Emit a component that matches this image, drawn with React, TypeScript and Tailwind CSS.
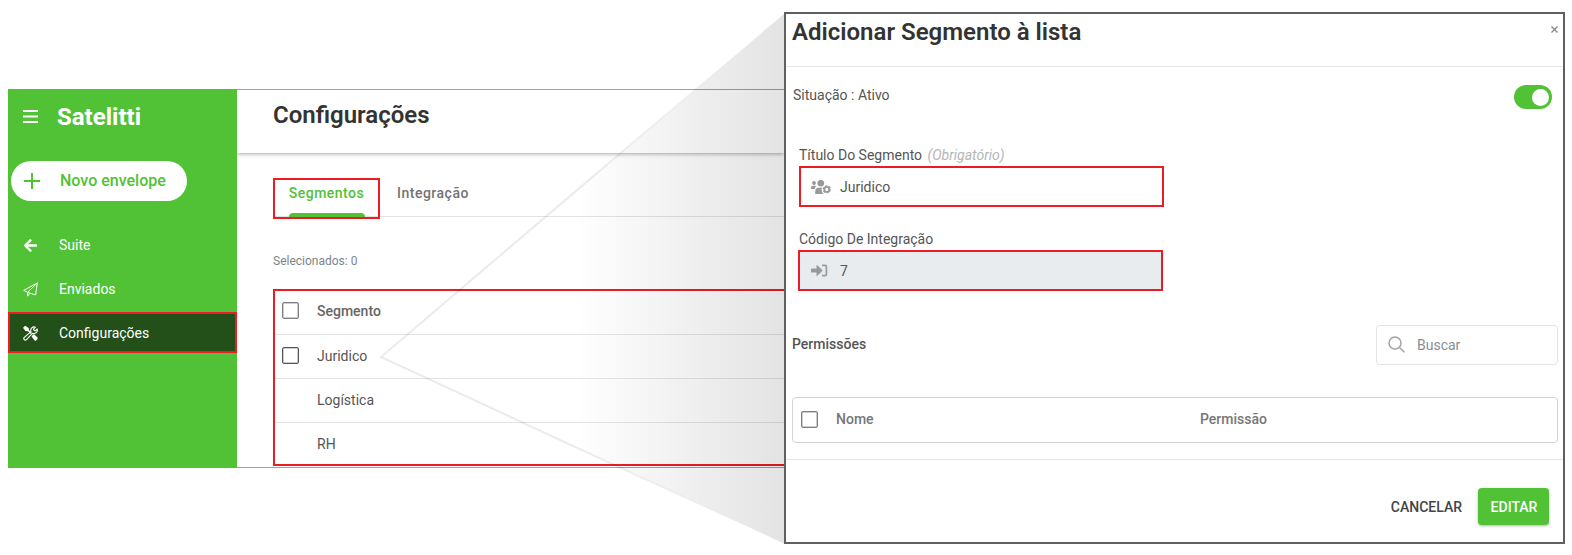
import { FaArrowLeft } from "react-icons/fa";

const segments = [
  { name: "Juridico", checkbox: true },
  { name: "Logística", checkbox: false },
  { name: "RH", checkbox: false },
];

function PlaneIcon() {
  return (
    <svg width="15" height="15" viewBox="0 0 15 15" fill="none" stroke="currentColor" strokeWidth="1" strokeLinejoin="round">
      <path d="M14.3.9.7 8.4l3.9 1.9L12.6 13zM14.3.9 4.6 10.3v3.9l2.3-3" />
    </svg>
  );
}

function ToolsIcon() {
  return (
    <svg width="15" height="15" viewBox="0 0 15 15" fill="none" stroke="currentColor" strokeWidth="1.1" strokeLinejoin="round">
      {/* wrench */}
      <path d="M8 5.6a3.4 3.4 0 0 1 4.4-4.4L10.6 3l.4 1.4 1.4.4 1.8-1.8a3.4 3.4 0 0 1-4.5 4.2L3.5 13.6a1.5 1.5 0 0 1-2.2-2.2z" />
      {/* screwdriver */}
      <path d="M.7 2.2 2.2.7l2.9 1.9v1.6l3.2 3.2" strokeWidth="1.5" />
      <path d="M1 2.2 2.2 1l2.3 1.8.1 1.8-1.8-.1z" fill="currentColor" />
      <path d="m8.8 9.9 1.6-1.6 1 .1 3.1 3.2a1.6 1.6 0 0 1 0 1.5l-1.4 1.4a1.6 1.6 0 0 1-1.5 0L8.9 11z" fill="currentColor" stroke="none" />
    </svg>
  );
}

function UsersCogIcon() {
  return (
    <svg width="20" height="14" viewBox="0 0 20 14" fill="#999">
      <circle cx="3" cy="3" r="1.9" />
      <path d="M0 9V7.5A1.9 1.9 0 0 1 1.9 5.7h2.4l1 .4A5.300 5.300 0 0 0 3.700 9z" />
      <circle cx="9.800" cy="3.300" r="3.300" />
      <path d="M4.200 14v-2.400a3.800 3.800 0 0 1 3.700-3.900h2.600l.6.100-.6 2 .9 3 1.200 1.200z" />
      <circle cx="15.800" cy="9.400" r="2.500" fill="none" stroke="#999" strokeWidth="1.900" />
      <circle cx="15.800" cy="9.400" r="3.600" fill="none" stroke="#999" strokeWidth="1.200" strokeDasharray="1.900 1.870" />
    </svg>
  );
}

function SignInIcon() {
  return (
    <svg width="17" height="13" viewBox="0 0 17 13">
      <path
        d="M.5 4.600h5V1.500q0-1 .8-.3l5 4.700q.5.500 0 1l-5 4.800q-.8.700-.8-.300V8.400h-5q-.5 0-.5-.500V5.100q0-.5.5-.5z"
        fill="#999"
      />
      <path d="M11 1.300h2.900q1.500 0 1.500 1.500v7.400q0 1.500-1.500 1.500H11" fill="none" stroke="#999" strokeWidth="1.700" />
    </svg>
  );
}

function Checkbox({ dark = false }: { dark?: boolean }) {
  return (
    <span
      className={`block h-[17px] w-[17px] shrink-0 rounded-[2px] border shadow-[inset_0_0_0_0.5px_#999] ${
        dark ? "border-[#555]" : "border-[#808080]"
      }`}
    />
  );
}

function Sidebar() {
  return (
    <aside className="w-[229px] shrink-0 bg-[#51c235] text-white">
      {/* Brand */}
      <div className="flex h-14 items-center pl-[15px]">
        <svg className="-mt-px" width="15" height="13" viewBox="0 0 15 13" stroke="currentColor" strokeWidth="2">
          <path d="M0 1h15M0 6.500h15M0 12h15" />
        </svg>
        <h2 className="ml-[19px] text-2xl leading-8 font-bold">Satelitti</h2>
      </div>

      {/* New envelope */}
      <button className="mt-4 ml-[3px] flex h-10 w-[176px] items-center rounded-full bg-white pl-[13px] text-[#51c235]">
        <svg width="16" height="16" viewBox="0 0 16 16" stroke="currentColor" strokeWidth="2">
          <path d="M0 8h16M8 0v16" />
        </svg>
        <span className="ml-5 text-base font-medium">Novo envelope</span>
      </button>

      {/* Menu */}
      <nav className="mt-[23px] flex flex-col gap-[3px] text-sm">
        <a className="flex h-[41px] items-center pt-px pl-[15px]">
          <FaArrowLeft size={15} />
          <span className="ml-[21px]">Suite</span>
        </a>
        <a className="flex h-[41px] items-center pt-px pl-[15px]">
          <PlaneIcon />
          <span className="ml-[21px]">Enviados</span>
        </a>
        <a className="flex h-[41px] items-center border-2 border-[#ed1c24] bg-[#234f18] pt-px pl-[13px]">
          <ToolsIcon />
          <span className="ml-[21px]">Configurações</span>
        </a>
      </nav>
    </aside>
  );
}

function Settings() {
  return (
    <main className="flex-1 border-y border-[#6cc957]">
      <header className="h-[63px] pl-9 shadow-[0_1px_4px_rgba(0,0,0,0.35)] [clip-path:inset(0_0_-8px_0)]">
        <h1 className="text-2xl leading-[50px] font-semibold text-[#333]">Configurações</h1>
      </header>

      <div className="pl-9">
        {/* Tabs */}
        <div className="mt-[25px] flex h-[39px] border-b border-[#e2e2e2] text-sm font-medium">
          <div className="flex h-[41px] w-[107px] flex-col items-center justify-between border-2 border-[#ed1c24] pt-[3px]">
            <span className="leading-5 tracking-[0.5px] text-[#51c235]">Segmentos</span>
            <span className="h-1 w-[76px] rounded-t bg-[#51c235]" />
          </div>
          <span className="ml-[17px] pt-[5px] leading-5 tracking-[0.5px] text-[#737373]">Integração</span>
        </div>

        <p className="mt-9 text-xs leading-4 text-[#7c858d]">Selecionados: 0</p>

        {/* Segment list */}
        <div className="mt-5 h-[177px] border-2 border-r-0 border-[#ed1c24] text-sm text-[#555]">
          <div className="flex h-11 items-center border-b border-[#e4e4e4] pb-1 pl-[7px] font-medium text-[#666]">
            <Checkbox />
            <span className="ml-[18px]">Segmento</span>
          </div>
          {segments.map((segment) => (
            <div
              key={segment.name}
              className="flex h-11 items-center border-b border-[#e4e4e4] pb-[2px] pl-[7px] last:h-[42px] last:border-0 last:pb-0"
            >
              {segment.checkbox ? <Checkbox dark /> : <span className="w-[17px]" />}
              <span className="ml-[18px]">{segment.name}</span>
            </div>
          ))}
        </div>
      </div>
    </main>
  );
}

// Beam that links the "Juridico" row to the dialog
function Callout() {
  return (
    <svg className="pointer-events-none absolute top-0 left-0" width="785" height="555">
      <defs>
        <linearGradient id="beam" x1="575" x2="784" y1="0" y2="0" gradientUnits="userSpaceOnUse">
          <stop offset="0" stopColor="#000" stopOpacity="0" />
          <stop offset="1" stopColor="#000" stopOpacity="0.11" />
        </linearGradient>
        <linearGradient id="beam-edge" x1="575" x2="784" y1="0" y2="0" gradientUnits="userSpaceOnUse">
          <stop offset="0" stopColor="#000" stopOpacity="0.08" />
          <stop offset="0.8" stopColor="#000" stopOpacity="0" />
        </linearGradient>
      </defs>
      <path d="M785 13 381 357 785 544Z" fill="url(#beam)" />
      <path d="M785 13 381 357 785 544" fill="none" stroke="url(#beam-edge)" strokeWidth="2" />
    </svg>
  );
}

function SegmentDialog() {
  return (
    <section className="relative mt-3 flex h-[532px] w-[781px] flex-col border-2 border-[#606060] bg-white text-sm text-[#555]">
      {/* Title */}
      <header className="flex h-[53px] shrink-0 justify-between border-b border-[#e2e7eb] pr-[5px] pl-[6px]">
        <h2 className="text-2xl leading-9 font-semibold text-[#333]">Adicionar Segmento à lista</h2>
        <svg className="mt-3" width="7" height="7" viewBox="0 0 7 7" stroke="#888" strokeWidth="1.4">
          <path d="m.5.5 6 6m0-6-6 6" />
        </svg>
      </header>

      {/* Status */}
      <div className="flex h-[42px] items-end justify-between pr-[11px] pl-[7px]">
        <span className="mb-1 leading-5">Situação : Ativo</span>
        <span className="flex h-6 w-[38px] items-center justify-end rounded-full bg-[#51c235] pr-[3px]">
          <span className="h-[17px] w-[17px] rounded-full bg-white" />
        </span>
      </div>

      {/* Fields */}
      <div className="mt-9 ml-3">
        <label className="block h-[21px] pl-px leading-5">
          Título Do Segmento <em className="ml-[2px] text-[#b5b5b5]">(Obrigatório)</em>
        </label>
        <div className="ml-px flex h-[41px] w-[365px] items-center border-2 border-[#ed1c24] pl-[10px]">
          <UsersCogIcon />
          <span className="ml-[9px]">Juridico</span>
        </div>
        <label className="mt-[22px] block h-[21px] pl-px leading-5">Código De Integração</label>
        <div className="flex h-[41px] w-[365px] items-center border-2 border-[#ed1c24] bg-[#e9ecef] pl-[11px]">
          <SignInIcon />
          <span className="ml-3">7</span>
        </div>
      </div>

      {/* Permissions */}
      <div className="mt-[34px] flex h-10 items-center justify-between px-[5px]">
        <span className="pb-[2px] pl-px font-medium">Permissões</span>
        <div className="flex h-10 w-[182px] items-center rounded border border-[#e4e4e4] pl-[11px] text-[#868e96]">
          <svg className="-mt-[2px]" width="17" height="17" viewBox="0 0 17 17" fill="none" stroke="#a3a3a3" strokeWidth="1.5">
            <circle cx="7" cy="7" r="6" />
            <path d="m11.500 11.500 5 4.700" />
          </svg>
          <span className="ml-3">Buscar</span>
        </div>
      </div>
      <div className="mt-8 mr-[5px] ml-[6px] flex h-[46px] items-center rounded border border-[#d4d4d4] pb-[2px] pl-2 font-medium text-[#777]">
        <Checkbox />
        <span className="ml-[18px] w-[364px]">Nome</span>
        <span>Permissão</span>
      </div>

      {/* Actions */}
      <footer className="mt-4 flex flex-1 items-start justify-end border-t border-[#e2e7eb] pt-7 pr-[14px] font-medium">
        <button className="h-[37px] text-[#444]">CANCELAR</button>
        <button className="ml-4 h-[37px] w-[71px] rounded bg-[#51c235] pl-px text-white shadow-[0_1px_3px_rgba(0,0,0,0.3)]">
          EDITAR
        </button>
      </footer>
    </section>
  );
}

export default function App() {
  return (
    <div className="relative flex h-[555px] w-[1572px] overflow-hidden bg-white pl-2 font-[Roboto,sans-serif]">
      <div className="mt-[89px] flex h-[379px] w-[776px] shrink-0">
        <Sidebar />
        <Settings />
      </div>
      <Callout />
      <SegmentDialog />
    </div>
  );
}
